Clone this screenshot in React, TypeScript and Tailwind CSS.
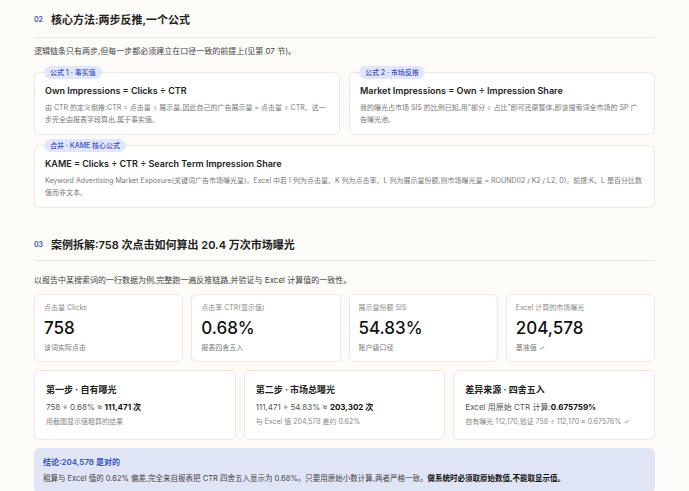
const F = { fontFamily: 'Inter, "Noto Sans CJK SC", sans-serif' };

function Tag({ t }: { t: string }) {
  return <span className="absolute -top-[7px] left-[9px] rounded-full bg-[#e1e6fa] px-[6px] py-[1px] text-[7px] font-medium text-[#3a4fc2] leading-[11px]">{t}</span>;
}

function Stat({ l, v, s }: { l: string; v: string; s: string }) {
  return (
    <div className="rounded-[6px] border border-[#ece9e2] bg-white px-[9px] pt-[8px] pb-[8px]">
      <div className="text-[7px] text-[#8a8a8a] leading-[10px]">{l}</div>
      <div className="mt-[5px] text-[17px] font-medium text-[#111] leading-[20px]">{v}</div>
      <div className="mt-[5px] text-[7px] text-[#777] leading-[10px]">{s}</div>
    </div>
  );
}

export default function App() {
  return (
    <div style={F} className="min-h-[491px] w-[689px] bg-[#fcfbf8] px-[34px] text-[#222]">
      <div className="flex items-center gap-[8px] border-b border-[#ebe8e1] pt-[12px] pb-[8px]">
        <span className="text-[7px] font-semibold text-[#3a4fc2]">02</span>
        <span className="text-[11px] font-semibold">核心方法:两步反推,一个公式</span>
      </div>
      <p className="mt-[7px] text-[8px] text-[#444] leading-[12px]">逻辑链条只有两步,但每一步都必须建立在口径一致的前提上(见第 07 节)。</p>
      <div className="mt-[15px] grid grid-cols-2 gap-[9px]">
        <div className="relative rounded-[6px] border border-[#ece9e2] bg-white px-[10px] pt-[12px] pb-[8px]">
          <Tag t="公式 1 · 事实值" />
          <div className="text-[9px] font-semibold leading-[12px]">Own Impressions = Clicks ÷ CTR</div>
          <div className="mt-[5px] text-[7px] text-[#777] leading-[12px]">由 CTR 的定义倒推:CTR = 点击量 ÷ 展示量,因此自己的广告展示量 = 点击量 ÷ CTR。这一步完全由报表字段算出,属于事实值。</div>
        </div>
        <div className="relative rounded-[6px] border border-[#ece9e2] bg-white px-[10px] pt-[12px] pb-[8px]">
          <Tag t="公式 2 · 市场反推" />
          <div className="text-[9px] font-semibold leading-[12px]">Market Impressions = Own ÷ Impression Share</div>
          <div className="mt-[5px] text-[7px] text-[#777] leading-[12px]">我的曝光占市场 SIS 的比例已知,用“部分 ÷ 占比”即可还原整体,即该搜索词全市场的 SP 广告曝光池。</div>
        </div>
      </div>
      <div className="relative mt-[10px] rounded-[6px] border border-[#ece9e2] bg-white px-[10px] pt-[12px] pb-[8px]">
        <Tag t="合并 · KAME 核心公式" />
        <div className="text-[9px] font-semibold leading-[12px]">KAME = Clicks ÷ CTR ÷ Search Term Impression Share</div>
        <div className="mt-[5px] text-[7px] text-[#777] leading-[12px]">Keyword Advertising Market Exposure(关键词广告市场曝光量)。Excel 中若 I 列为点击量、K 列为点击率、L 列为展示量份额,则市场曝光量 = ROUND(I2 / K2 / L2, 0)。前提:K、L 是百分比数值而非文本。</div>
      </div>

      <div className="mt-[17px] flex items-center gap-[8px] border-b border-[#ebe8e1] pt-[12px] pb-[7px]">
        <span className="text-[7px] font-semibold text-[#3a4fc2]">03</span>
        <span className="text-[11px] font-semibold">案例拆解:758 次点击如何算出 20.4 万次市场曝光</span>
      </div>
      <p className="mt-[13px] text-[8px] text-[#444] leading-[12px]">以报告中某搜索词的一行数据为例,完整跑一遍反推链路,并验证与 Excel 计算值的一致性。</p>
      <div className="mt-[8px] grid grid-cols-4 gap-[8px]">
        <Stat l="点击量 Clicks" v="758" s="该词实际点击" />
        <Stat l="点击率 CTR(显示值)" v="0.68%" s="报表四舍五入" />
        <Stat l="展示量份额 SIS" v="54.83%" s="账户级口径" />
        <Stat l="Excel 计算的市场曝光" v="204,578" s="基准值 ✓" />
      </div>
      <div className="mt-[8px] grid grid-cols-3 gap-[8px]">
        {[
          ["第一步 · 自有曝光", <>758 ÷ 0.68% ≈ <b className="text-[#111]">111,471 次</b></>, "用截图显示值粗算的结果"],
          ["第二步 · 市场总曝光", <>111,471 ÷ 54.83% ≈ <b className="text-[#111]">203,302 次</b></>, "与 Excel 值 204,578 差约 0.62%"],
          ["差异来源 · 四舍五入", <>Excel 用原始 CTR 计算:<b className="text-[#111]">0.675759%</b></>, "自有曝光 112,170,验证 758 ÷ 112,170 ≈ 0.67576% ✓"],
        ].map((c, i) => (
          <div key={i} className="rounded-[6px] border border-[#ece9e2] bg-white px-[11px] pt-[13px] pb-[12px]">
            <div className="text-[9px] font-semibold leading-[12px]">{c[0]}</div>
            <div className="mt-[6px] text-[8px] text-[#555] leading-[11px]">{c[1]}</div>
            <div className="mt-[4px] text-[7px] text-[#888] leading-[10px]">{c[2]}</div>
          </div>
        ))}
      </div>
      <div className="mt-[8px] rounded-[6px] bg-[#e0e5f6] px-[9px] py-[9px]">
        <div className="text-[8px] font-semibold text-[#3a4fc2] leading-[11px]">结论:204,578 是对的</div>
        <div className="mt-[5px] text-[7.5px] text-[#444] leading-[11px]">粗算与 Excel 值的 0.62% 偏差,完全来自报表把 CTR 四舍五入显示为 0.68%。只要用原始小数计算,两者严格一致。<b className="text-[#111]">做系统时必须取原始数值,不能取显示值。</b></div>
      </div>
    </div>
  );
}
